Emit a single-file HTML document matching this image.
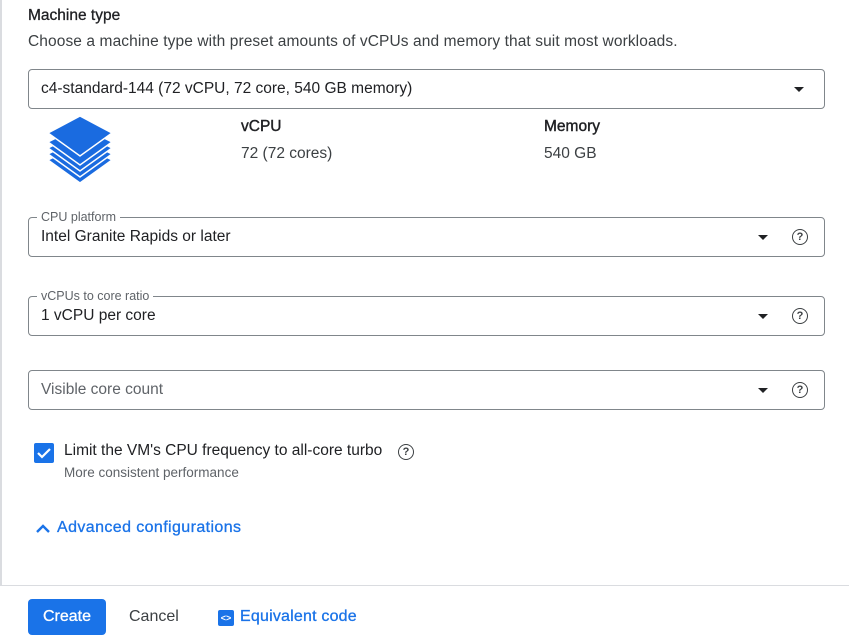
<!DOCTYPE html><html><head><style>
body{margin:0;width:849px;height:642px;background:#fff;font-family:"Liberation Sans",Arial,sans-serif;position:relative;overflow:hidden;color:#202124}
.a{position:absolute}
.box{position:absolute;left:28px;width:797px;height:40px;border:1px solid #80868b;border-radius:4px;box-sizing:border-box}
.box .t{position:absolute;left:12px;top:10px;font-size:15.5px}
.lg{position:absolute;left:8px;top:-8px;background:#fff;padding:0 4px;font-size:12.5px;color:#5f6368}
.arr{position:absolute;right:56px;top:17px;width:0;height:0;border-left:5px solid transparent;border-right:5px solid transparent;border-top:5px solid #202124}
.q{position:absolute;right:16px;top:11px;width:14px;height:14px;border:1.6px solid #3c4043;border-radius:50%;font-size:11px;font-weight:bold;text-align:center;line-height:14px;color:#3c4043}
</style></head><body>
<div class="a" style="left:0;top:0;width:2px;height:586px;background:#dadce0"></div>
<div class="a" style="left:0;top:585px;width:849px;height:1px;background:#dadce0"></div>
<div class="a" style="left:28px;top:7px;font-size:15.5px;color:#202124;-webkit-text-stroke:0.3px #202124">Machine type</div>
<div class="a" style="left:28px;top:33px;font-size:15.5px;color:#3c4043;letter-spacing:0.1px">Choose a machine type with preset amounts of vCPUs and memory that suit most workloads.</div>
<div class="box" style="top:69px"><div class="t" style="top:10px">c4-standard-144 (72 vCPU, 72 core, 540 GB memory)</div><div class="arr" style="right:20px"></div></div>
<svg class="a" style="left:46px;top:114px" width="68" height="72" viewBox="0 0 68 72">
<g fill="#1a6be0" stroke="#fff" stroke-width="1.5">
<path d="M2 46 L34 30 L66 46 L34 69Z"/><path d="M2 40 L34 24 L66 40 L34 63Z"/><path d="M2 34 L34 18 L66 34 L34 57Z"/><path d="M2 28 L34 12 L66 28 L34 51Z"/><path d="M2 19 L34 2 L66 19 L34 42Z"/></g></svg>
<div class="a" style="left:241px;top:118px;font-size:15.5px;-webkit-text-stroke:0.4px #202124">vCPU</div>
<div class="a" style="left:241px;top:145px;font-size:15.5px;color:#3c4043">72 (72 cores)</div>
<div class="a" style="left:544px;top:118px;font-size:15.5px;-webkit-text-stroke:0.4px #202124">Memory</div>
<div class="a" style="left:544px;top:145px;font-size:15.5px;color:#3c4043">540 GB</div>
<div class="box" style="top:217px"><span class="lg">CPU platform</span><div class="t">Intel Granite Rapids or later</div><div class="arr"></div><div class="q">?</div></div>
<div class="box" style="top:296px"><span class="lg">vCPUs to core ratio</span><div class="t">1 vCPU per core</div><div class="arr"></div><div class="q">?</div></div>
<div class="box" style="top:370px"><div class="t" style="color:#5f6368">Visible core count</div><div class="arr"></div><div class="q">?</div></div>
<div class="a" style="left:34px;top:443px;width:20px;height:20px;background:#1a73e8;border-radius:2px"><svg width="20" height="20"><path d="M4 10 L8 14 L16 6" stroke="#fff" stroke-width="2.2" fill="none"/></svg></div>
<div class="a" style="left:64px;top:442px;font-size:15.5px">Limit the VM's CPU frequency to all-core turbo</div>
<div class="q" style="left:398px;top:444px;right:auto">?</div>
<div class="a" style="left:64px;top:465px;font-size:13.5px;color:#5f6368">More consistent performance</div>
<svg class="a" style="left:35px;top:522px" width="16" height="12"><path d="M2 10 L8 4 L14 10" stroke="#1a73e8" stroke-width="2.4" fill="none"/></svg>
<div class="a" style="left:57px;top:519px;font-size:16px;color:#1a73e8;letter-spacing:0.4px;-webkit-text-stroke:0.3px #1a73e8">Advanced configurations</div>
<div class="a" style="left:28px;top:599px;width:78px;height:36px;background:#1a73e8;border-radius:4px;color:#fff;font-size:16px;text-align:center;line-height:36px;-webkit-text-stroke:0.3px #fff">Create</div>
<div class="a" style="left:129px;top:608px;font-size:16px;color:#3c4043">Cancel</div>
<div class="a" style="left:218px;top:610px;width:16px;height:16px;background:#1a73e8;border-radius:2px;color:#fff;font-size:9px;text-align:center;line-height:16px;font-weight:bold">&lt;&gt;</div>
<div class="a" style="left:240px;top:608px;font-size:16px;color:#1a73e8;letter-spacing:0.2px;-webkit-text-stroke:0.3px #1a73e8">Equivalent code</div>
</body></html>
